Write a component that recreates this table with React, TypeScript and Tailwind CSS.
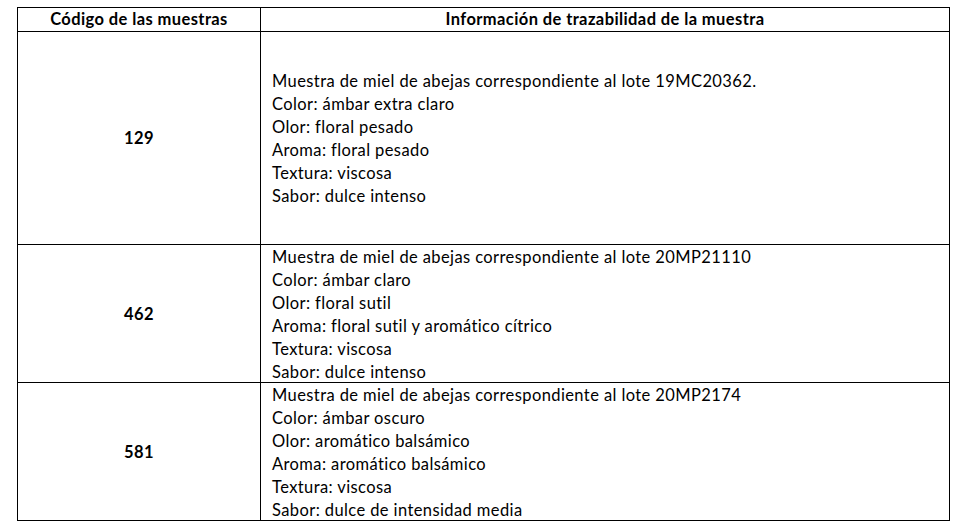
import React from "react";

const rows = [
  {
    code: "129",
    h: "h-[212px]",
    lines: [
      "Muestra de miel de abejas correspondiente al lote 19MC20362.",
      "Color: ámbar extra claro",
      "Olor: floral pesado",
      "Aroma: floral pesado",
      "Textura: viscosa",
      "Sabor: dulce intenso",
    ],
  },
  {
    code: "462",
    h: "h-[137px]",
    lines: [
      "Muestra de miel de abejas correspondiente al lote 20MP21110",
      "Color: ámbar claro",
      "Olor: floral sutil",
      "Aroma: floral sutil y aromático cítrico",
      "Textura: viscosa",
      "Sabor: dulce intenso",
    ],
  },
  {
    code: "581",
    h: "h-[137px]",
    lines: [
      "Muestra de miel de abejas correspondiente al lote 20MP2174",
      "Color: ámbar oscuro",
      "Olor: aromático balsámico",
      "Aroma: aromático balsámico",
      "Textura: viscosa",
      "Sabor: dulce de intensidad media",
    ],
  },
];

export default function App() {
  return (
    <div
      className="w-[979px] h-[529px] bg-white pt-[7px] pl-[17px] text-black text-[16.5px] tracking-[0.4px]"
      style={{ fontFamily: "Lato, 'Liberation Sans', sans-serif" }}
    >
      <div className="w-[933px] border border-black grid grid-cols-[242px_1px_688px]">
        <div className="h-[23px] flex items-center justify-center font-bold leading-[23px] pb-[1px]">
          Código de las muestras
        </div>
        <div className="bg-black" />
        <div className="h-[23px] flex items-center justify-center font-bold leading-[23px] pb-[1px]">
          Información de trazabilidad de la muestra
        </div>
        {rows.map((r) => (
          <React.Fragment key={r.code}>
            <div className="col-span-3 h-px bg-black" />
            <div className={`${r.h} flex items-center justify-center font-bold pt-[1px]`}>
              {r.code}
            </div>
            <div className="bg-black" />
            <div className={`${r.h} flex flex-col justify-center pl-[11px] pt-[2px] leading-[23px]`}>
              {r.lines.map((l) => (
                <div key={l} className="whitespace-nowrap">{l}</div>
              ))}
            </div>
          </React.Fragment>
        ))}
      </div>
    </div>
  );
}
